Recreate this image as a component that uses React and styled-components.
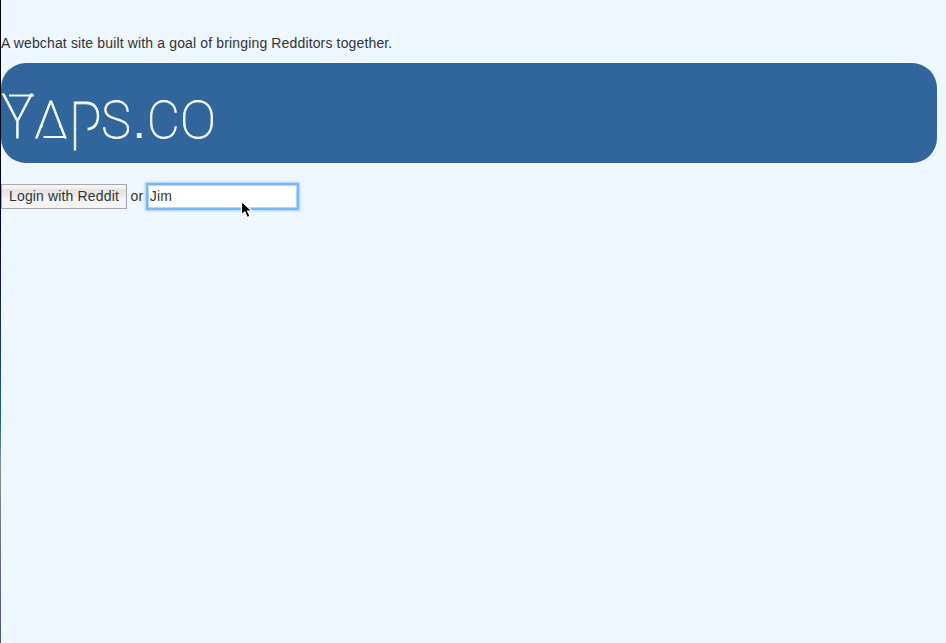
import React from "react";
import styled, { createGlobalStyle } from "styled-components";

const GlobalStyle = createGlobalStyle`
  * { box-sizing: border-box; }
  body {
    margin: 0;
    background: #eef6fe;
    color: #333;
    font: 14px/20px "Liberation Sans", Arial, sans-serif;
    letter-spacing: 0.145px;
  }
`;

const Page = styled.main`
  display: grid;
  grid-template-columns: 1px 1fr;
  height: 643px;
  overflow: hidden;
`;

const Edge = styled.div`
  background: linear-gradient(#02020c 0, #03051c 210px, #14295a 310px, #174676 370px,
    #1c648f 420px, #80919d 465px, #667489 540px, #44547a 643px);
`;

const Content = styled.div`
  padding: 33px 9px 0 0;
`;

const Tagline = styled.p`
  margin: 0 0 10px;
`;

const Banner = styled.header`
  height: 100px;
  border-radius: 25px;
  background: #30669b;
`;

const Logo = styled.svg`
  display: block;
  width: 230px;
  height: 100px;
  overflow: visible;
  font-family: Roboto, Lato, sans-serif;
  letter-spacing: 0;
  fill: #f2f8fe;
`;

const Letter = styled.text`
  font-size: 52px;
  font-weight: 100;
  stroke: #f2f8fe;
  stroke-width: 0.85px;
`;

const Dot = styled.text`
  font: 46px "Liberation Sans", Arial, sans-serif;
`;

const LogoBar = styled.path`
  stroke: #f2f8fe;
  stroke-width: 2px;
`;

const LogoGap = styled.path`
  fill: #30669b;
`;

const LoginRow = styled.form`
  display: flex;
  align-items: center;
  margin-top: 20px;
  height: 27px;
`;

const LoginButton = styled.button`
  width: 126px;
  height: 25px;
  padding: 0 0 2px;
  border: 1px solid #a9a7aa;
  background: linear-gradient(#f4f4f4 0, #f3f3f3 3px, #e6e6e6 4px, #e9e9e9 11px, #f4f4f4 13px, #f4f4f4);
  color: #333;
  font: inherit;
  letter-spacing: inherit;
`;

const Or = styled.span`
  margin: -2px 4px 0 3.5px;
`;

const NameInput = styled.input`
  width: 151px;
  height: 25px;
  padding: 0 1.5px 2px;
  border: 1px solid #7ab5f8;
  outline: none;
  background: #fff;
  box-shadow: inset 0 0 0 1px #b5d6fb, 0 0 0 1px #7ab5f8, 0 0 2px 2px #a9d0fb;
  color: #333;
  font: inherit;
  letter-spacing: inherit;
`;

const Cursor = styled.svg`
  position: absolute;
  left: 240px;
  top: 200px;
  width: 14px;
  height: 20px;
`;

function Wordmark() {
  return (
    <Logo viewBox="1 63 230 100" role="img" aria-label="Yaps.co">
      <Letter transform="translate(1.4 138) scale(1.03 1.16)">Y</Letter>
      <Letter transform="translate(34.8 138) scale(1.04 0.98)">A</Letter>
      <LogoGap d="M43.6 124H58.2L60.2 129.5H41.6Z" />
      <Letter transform="translate(69 150) scale(1.04 1.27)">P</Letter>
      <LogoGap d="M76.3 126H87.5V132H76.3Z" />
      <Letter transform="translate(101.3 138.3) scale(0.96 0.98)">S</Letter>
      <Dot x="132.8" y="138">.</Dot>
      <Letter transform="translate(147 138.3) scale(0.97 0.98)">C</Letter>
      <Letter transform="translate(180 138.3) scale(1.04 0.98)">O</Letter>
      <LogoBar d="M9 95.5H34M43.5 137H66" />
    </Logo>
  );
}

export default function App() {
  return (
    <>
      <GlobalStyle />
      <Page>
        <Edge />
        <Content>
          <Tagline>A webchat site built with a goal of bringing Redditors together.</Tagline>
          <Banner><Wordmark /></Banner>
          <LoginRow>
            <LoginButton type="button">Login with Reddit</LoginButton>
            <Or>or</Or>
            <NameInput defaultValue="Jim" aria-label="Name" />
          </LoginRow>
        </Content>
      </Page>
      <Cursor viewBox="0 0 14 20" aria-hidden="true">
        <path d="M1.5 1.2V15L4.8 12L7.2 17.5L10 16.3L7.6 11H12Z" fill="#000" stroke="#fff" strokeWidth="1.2" />
      </Cursor>
    </>
  );
}
